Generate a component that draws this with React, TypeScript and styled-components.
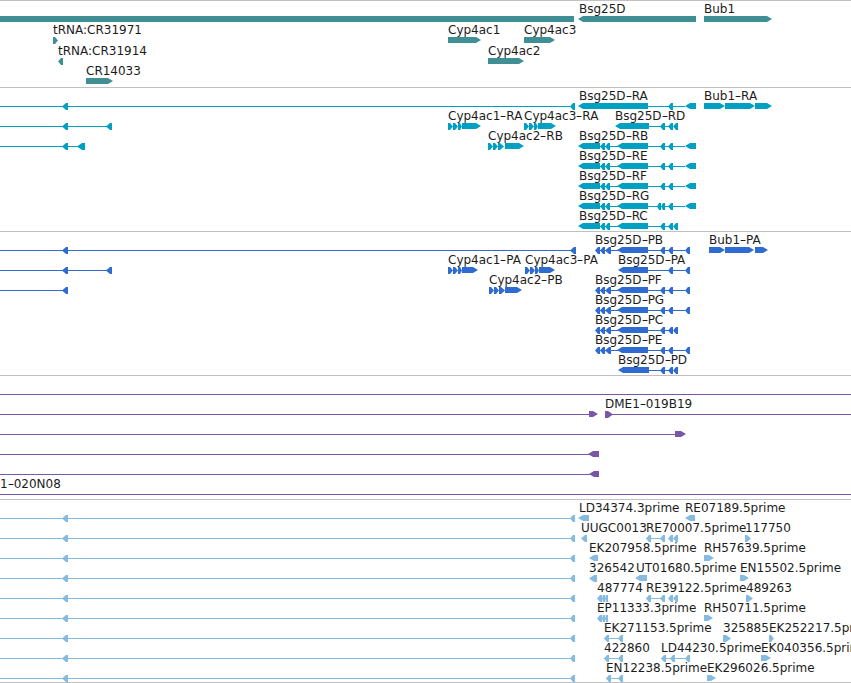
import { FC } from "react"
import styled, { createGlobalStyle } from "styled-components"

const GlobalStyle = createGlobalStyle`
  html, body {
    margin: 0;
    background: #fff;
  }
`

const Browser = styled.div`
  width: 851px;
  height: 683px;
  overflow: hidden;
  background: #fff;
  font-family: "DejaVu Sans", "Liberation Sans", sans-serif;
  font-size: 12px;
  line-height: 14px;
  color: #1c1c1c;
`

const TrackBox = styled.section<{ $height: number }>`
  position: relative;
  box-sizing: border-box;
  height: ${p => p.$height}px;
  border-top: 1px solid #c0c0c0;
  overflow: hidden;
`

const Canvas = styled.svg`
  position: absolute;
  left: 0;
  top: -1px;
  display: block;
`

const Label = styled.span.attrs<{ $x: number; $y: number }>(p => ({
  style: { left: p.$x, top: p.$y },
}))`
  position: absolute;
  white-space: nowrap;
`

// the hyphen in these labels is drawn a good deal longer than the font's own
const Dash = styled.span`
  display: inline-block;
  width: 6px;
  text-align: center;
  transform: scaleX(1.5);
`

// '<' and '>' are exons with a head, '=' is a plain block
type Part = ["<" | ">" | "=", number, number]

type Feature = {
  y: number
  label?: string
  x?: number
  line?: [number, number]
  parts?: Part[]
}

const exonPoints = ([kind, a, b]: Part, y: number) => {
  const width = b - a
  const small = width <= 8
  const top = y - 3
  const bottom = small ? y + 4 : y + 3
  const tip = small ? y + 0.5 : y
  const head = Math.max(Math.min(width - 2, 5), 1)
  if (kind === "<") {
    return `${a},${tip} ${a + head},${top} ${b},${top} ${b},${bottom} ${a + head},${bottom}`
  }
  if (kind === ">") {
    return `${b},${tip} ${b - head},${top} ${a},${top} ${a},${bottom} ${b - head},${bottom}`
  }
  return `${a},${top} ${b},${top} ${b},${bottom} ${a},${bottom}`
}

const bsgTail: Part[] = [["<", 660, 665], ["<", 668, 673], ["<", 685, 696]]
const bsgShort: Part[] = [["<", 660, 665], ["<", 668, 673], ["<", 673, 678]]
const bsgHead: Part[] = [["<", 578, 600], ["<", 600, 605], ["<", 605, 610], ["<", 617, 648]]
const pepTail: Part[] = [["<", 660, 665], ["<", 668, 673], ["<", 685, 690]]
const pepHead: Part[] = [["<", 595, 600], ["<", 600, 605], ["<", 605, 611], ["<", 617, 648]]
const mid = [["<", 62, 68]] as Part[]
const ests: Part[] = [["<", 62, 68], ["<", 570, 575]]

const genes: Feature[] = [
  { y: 19, parts: [["=", 0, 574]] },
  { y: 19, label: "Bsg25D", x: 579, parts: [["<", 578, 696]] },
  { y: 19, label: "Bub1", x: 704, parts: [[">", 704, 772]] },
  { y: 40, label: "tRNA:CR31971", x: 53, parts: [[">", 53, 58]] },
  { y: 40, label: "Cyp4ac1", x: 448, parts: [[">", 448, 481]] },
  { y: 40, label: "Cyp4ac3", x: 524, parts: [[">", 524, 555]] },
  { y: 61, label: "tRNA:CR31914", x: 58, parts: [["<", 58, 63]] },
  { y: 61, label: "Cyp4ac2", x: 488, parts: [[">", 488, 524]] },
  { y: 81, label: "CR14033", x: 86, parts: [[">", 86, 113]] },
]

const transcripts: Feature[] = [
  { y: 106, line: [0, 574], parts: [...mid, ["<", 570, 575]] },
  { y: 106, label: "Bsg25D-RA", x: 579, line: [648, 685], parts: [["<", 578, 648], ["<", 668, 673], ["<", 685, 696]] },
  { y: 106, label: "Bub1-RA", x: 704, parts: [[">", 704, 725], [">", 725, 755], [">", 755, 772]] },
  { y: 126, line: [0, 112], parts: [...mid, ["<", 106, 112]] },
  { y: 126, label: "Cyp4ac1-RA", x: 448, parts: [[">", 448, 453], [">", 453, 458], [">", 458, 462], [">", 462, 481]] },
  { y: 126, label: "Cyp4ac3-RA", x: 524, parts: [[">", 524, 529], [">", 529, 534], [">", 534, 538], [">", 538, 556]] },
  { y: 126, label: "Bsg25D-RD", x: 615, line: [648, 673], parts: [["<", 615, 649], ...bsgShort] },
  { y: 146, line: [0, 80], parts: [...mid, ["<", 77, 85]] },
  { y: 146, label: "Cyp4ac2-RB", x: 488, parts: [[">", 488, 493], [">", 493, 498], [">", 498, 504], [">", 505, 524]] },
  { y: 146, label: "Bsg25D-RB", x: 579, line: [600, 685], parts: [...bsgHead, ...bsgTail] },
  { y: 166, label: "Bsg25D-RE", x: 579, line: [600, 685], parts: [...bsgHead, ...bsgTail] },
  { y: 186, label: "Bsg25D-RF", x: 579, line: [600, 685], parts: [...bsgHead, ...bsgTail] },
  { y: 206, label: "Bsg25D-RG", x: 579, line: [600, 685], parts: [["<", 578, 600], ["<", 600, 605], ["<", 605, 610], ["<", 617, 648], ["<", 657, 661], ["<", 661, 665], ["<", 668, 673], ["<", 685, 696]] },
  { y: 226, label: "Bsg25D-RC", x: 579, line: [600, 673], parts: [...bsgHead, ...bsgShort] },
]

const proteins: Feature[] = [
  { y: 250, line: [0, 574], parts: [...mid, ["<", 570, 576]] },
  { y: 250, label: "Bsg25D-PB", x: 595, line: [600, 685], parts: [...pepHead, ...pepTail] },
  { y: 250, label: "Bub1-PA", x: 709, parts: [[">", 709, 725], [">", 725, 754], [">", 755, 768]] },
  { y: 270, line: [0, 112], parts: [...mid, ["<", 106, 112]] },
  { y: 270, label: "Cyp4ac1-PA", x: 448, parts: [[">", 448, 453], [">", 453, 458], [">", 458, 462], [">", 462, 478]] },
  { y: 270, label: "Cyp4ac3-PA", x: 525, parts: [[">", 525, 530], [">", 530, 535], [">", 535, 539], [">", 539, 555]] },
  { y: 270, label: "Bsg25D-PA", x: 618, line: [648, 685], parts: [["<", 618, 648], ["<", 668, 673], ["<", 685, 690]] },
  { y: 290, line: [0, 68], parts: mid },
  { y: 290, label: "Cyp4ac2-PB", x: 489, parts: [[">", 489, 494], [">", 494, 499], [">", 499, 505], [">", 505, 522]] },
  { y: 290, label: "Bsg25D-PF", x: 595, line: [600, 685], parts: [...pepHead, ...pepTail] },
  { y: 310, label: "Bsg25D-PG", x: 595, line: [600, 685], parts: [...pepHead, ...pepTail] },
  { y: 330, label: "Bsg25D-PC", x: 595, line: [600, 673], parts: [...pepHead, ...bsgShort] },
  { y: 350, label: "Bsg25D-PE", x: 595, line: [600, 685], parts: [...pepHead, ...pepTail] },
  { y: 370, label: "Bsg25D-PD", x: 618, line: [648, 673], parts: [["<", 618, 649], ...bsgShort] },
]

const clones: Feature[] = [
  { y: 394, line: [0, 851] },
  { y: 414, line: [0, 590], parts: [[">", 589, 598]] },
  { y: 414, label: "DME1-019B19", x: 605, line: [612, 851], parts: [[">", 605, 613]] },
  { y: 434, line: [0, 676], parts: [[">", 675, 686]] },
  { y: 454, line: [0, 590], parts: [["<", 588, 599]] },
  { y: 474, line: [0, 590], parts: [["<", 589, 599]] },
  { y: 494, label: "1-020N08", x: 0, line: [0, 851] },
]

const est = (y: number): Feature => ({ y, line: [0, 574], parts: ests })
const re: Part[] = [["<", 646, 651], ["<", 660, 665], ["<", 668, 673], ["<", 673, 678]]

const estRows: Feature[] = [
  est(518),
  { y: 518, label: "LD34374.3prime", x: 579, parts: [["<", 578, 589]] },
  { y: 518, label: "RE07189.5prime", x: 685, parts: [["<", 685, 695]] },
  est(538),
  { y: 538, label: "UUGC0013", x: 581, parts: [["<", 581, 587]] },
  { y: 538, label: "RE70007.5prime", x: 646, line: [646, 665], parts: re },
  { y: 538, label: "117750", x: 745, parts: [[">", 745, 751]] },
  est(558),
  { y: 558, label: "EK207958.5prime", x: 589, parts: [["<", 589, 598]] },
  { y: 558, label: "RH57639.5prime", x: 704, parts: [[">", 704, 714]] },
  est(578),
  { y: 578, label: "326542", x: 589, parts: [["<", 589, 597]] },
  { y: 578, label: "UT01680.5prime", x: 636, parts: [["<", 635, 647]] },
  { y: 578, label: "EN15502.5prime", x: 740, parts: [[">", 740, 749]] },
  est(598),
  { y: 598, label: "487774", x: 597, parts: [["<", 597, 602], ["<", 602, 605], ["<", 605, 608]] },
  { y: 598, label: "RE39122.5prime", x: 646, line: [646, 665], parts: re },
  { y: 598, label: "489263", x: 746, parts: [[">", 746, 753]] },
  est(618),
  { y: 618, label: "EP11333.3prime", x: 597, parts: [["<", 597, 602], ["<", 602, 605], ["<", 605, 608]] },
  { y: 618, label: "RH50711.5prime", x: 704, parts: [[">", 704, 713]] },
  est(638),
  { y: 638, label: "EK271153.5prime", x: 604, line: [604, 623], parts: [["<", 604, 609], ["<", 618, 623]] },
  { y: 638, label: "325885", x: 723, parts: [[">", 723, 731]] },
  { y: 638, label: "EK252217.5prime", x: 769, parts: [[">", 769, 774]] },
  est(658),
  { y: 658, label: "422860", x: 604, line: [604, 623], parts: [["<", 604, 609], ["<", 618, 623]] },
  { y: 658, label: "LD44230.5prime", x: 661, line: [661, 690], parts: [["<", 661, 666], ["<", 670, 675], ["<", 685, 690]] },
  { y: 658, label: "EK040356.5prime", x: 761, parts: [[">", 761, 771]] },
  est(678),
  { y: 678, label: "EN12238.5prime", x: 606, line: [606, 623], parts: [["<", 606, 611], ["<", 618, 623]] },
  { y: 678, label: "EK296026.5prime", x: 707, parts: [[">", 707, 716]] },
]

const labelOffset = 18

const LabelText: FC<{ text: string }> = ({ text }) => {
  const [first, ...rest] = text.split("-")
  if (rest.length === 0) return <>{text}</>
  return <>{first}<Dash>-</Dash>{rest.join("-")}</>
}

const Track: FC<{ top: number; bottom: number; color: string; features: Feature[] }> = ({ top, bottom, color, features }) => {
  const height = bottom - top
  return (
    <TrackBox $height={height}>
      <Canvas width={851} height={height} viewBox={`0 ${top} 851 ${height}`}>
        <g fill={color}>
          {features.map((f, i) => (
            <g key={i}>
              {f.line && <rect x={f.line[0]} y={f.y} width={f.line[1] - f.line[0]} height={1} />}
              {f.parts?.map((part, j) => <polygon key={j} points={exonPoints(part, f.y)} />)}
            </g>
          ))}
        </g>
      </Canvas>
      {features.filter(f => f.label).map(f => (
        <Label key={f.label} $x={f.x ?? 0} $y={f.y - labelOffset - top}>
          <LabelText text={f.label as string} />
        </Label>
      ))}
    </TrackBox>
  )
}

const BottomRule = styled.div`
  border-top: 1px solid #c0c0c0;
`

export default function App() {
  return (
    <>
      <GlobalStyle />
      <Browser>
        <Track top={0} bottom={87} color="#408f94" features={genes} />
        <Track top={87} bottom={231} color="#00a0c2" features={transcripts} />
        <Track top={231} bottom={375} color="#2f6bd0" features={proteins} />
        <Track top={375} bottom={499} color="#7a56a8" features={clones} />
        <Track top={499} bottom={682} color="#85bbe0" features={estRows} />
        <BottomRule />
      </Browser>
    </>
  )
}
